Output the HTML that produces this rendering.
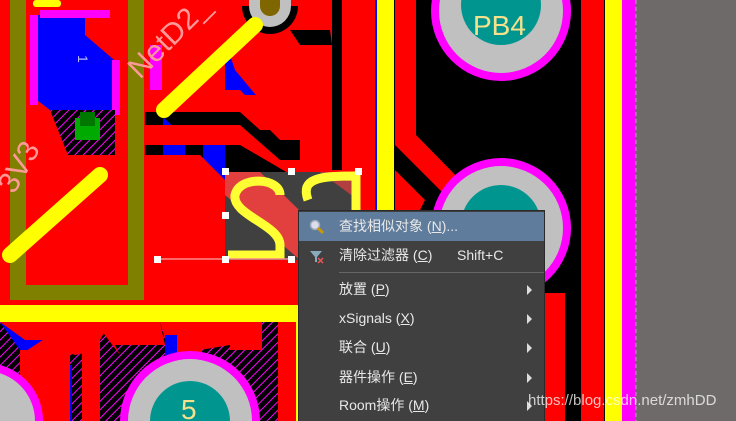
<!DOCTYPE html>
<html><head><meta charset="utf-8"><style>
html,body{margin:0;padding:0;width:736px;height:421px;overflow:hidden;background:#000}
#c{position:absolute;left:0;top:0;display:block}
.menu{position:absolute;left:298px;top:210px;width:245px;height:210px;background:#404040;border:1px solid #2a2a2a;border-bottom:none;font-family:"Liberation Sans","Noto Sans CJK SC",sans-serif;font-size:14px;color:#e8e8e8;overflow:hidden}
.row{position:absolute;left:0;width:245px;height:29px;line-height:29px}
.row span{position:absolute;left:40px}
.row .sc{left:158px}
.hl{background:#5f7c9c}
.arr{position:absolute;left:228px;top:10px;width:0;height:0;border-left:5px solid #ddd;border-top:5px solid transparent;border-bottom:5px solid transparent}
.sep{position:absolute;left:40px;top:61px;width:205px;height:1px;background:#666}
.wm{position:absolute;left:528px;top:392px;height:18px;line-height:18px;font-family:"Liberation Sans",sans-serif;font-size:15px;color:rgba(255,255,255,0.75)}
</style></head><body>
<svg id="c" width="736" height="421" viewBox="0 0 736 421">
<defs>
<pattern id="h" width="6" height="6" patternUnits="userSpaceOnUse" patternTransform="rotate(45)">
<rect width="6" height="6" fill="#000"/><rect width="1" height="6" fill="#f0f"/></pattern>
</defs>
<rect width="736" height="421" fill="#000"/>
<rect x="0" y="0" width="375" height="305" fill="#f00"/>
<polygon points="35,15 85,15 85,35 120,65 120,110 50,110 30,95" fill="#00f"/>
<rect x="40" y="10" width="70" height="8" fill="#f0f"/>
<rect x="30" y="15" width="8" height="90" fill="#f0f"/>
<rect x="112" y="60" width="8" height="55" fill="#f0f"/>
<polygon points="50,110 115,110 115,160 70,160" fill="url(#h)"/>
<rect x="75" y="118" width="25" height="22" fill="#0a0"/>
<rect x="80" y="112" width="15" height="14" fill="#070"/>
<rect x="145" y="90" width="80" height="80" fill="#000"/>
<rect x="163" y="90" width="22" height="80" fill="#00f"/>
<rect x="203" y="90" width="22" height="80" fill="#00f"/>
<polygon points="225,40 250,15 260,20 260,95 225,95" fill="#00f"/>
<rect x="150" y="45" width="12" height="50" fill="#f0f"/>
<polygon points="145,100 240,100 280,140 300,140 300,180 230,180" fill="#000"/>
<rect x="163" y="140" width="22" height="60" fill="#00f"/>
<rect x="203" y="140" width="22" height="60" fill="#00f"/>
<polygon points="145,90 240,90 260,110 300,110 345,155 345,175 300,130 260,130 240,112 145,112" fill="#f00"/>
<polygon points="145,125 240,125 280,160 300,160 300,180 240,145 145,145" fill="#f00"/>
<polygon points="60,155 200,155 225,180 225,305 0,305 0,110" fill="#f00"/>
<polygon points="145,185 200,185 225,205 225,305 145,305" fill="#f00"/>
<polygon points="245,0 335,0 335,20 315,45 310,50 320,70 375,70 375,180 310,150 260,100 235,70 225,40" fill="#f00"/>
<rect x="335" y="0" width="40" height="170" fill="#f00"/>
<rect x="332" y="0" width="10" height="170" fill="#000"/>
<polygon points="290,30 330,30 332,45 300,45" fill="#000"/>
<path d="M242,6 A28,28 0 0 0 298,6 Z" fill="#000"/>
<path d="M249,6 A21,21 0 0 0 291,6 L291,0 L249,0 Z" fill="#c0c0c0"/>
<path d="M260,6 A10,10 0 0 0 280,6 L280,0 L260,0 Z" fill="#806600"/>
<rect x="10" y="0" width="16" height="300" fill="#808000"/>
<rect x="128" y="0" width="16" height="300" fill="#808000"/>
<rect x="10" y="285" width="134" height="15" rx="4" fill="#808000"/>
<line x1="164" y1="110" x2="255" y2="25" stroke="#ff0" stroke-width="16" stroke-linecap="round"/>
<line x1="100" y1="175" x2="10" y2="255" stroke="#ff0" stroke-width="16" stroke-linecap="round"/>
<rect x="33" y="0" width="28" height="7" rx="3" fill="#ff0"/>
<text x="0" y="0" transform="translate(140,80) rotate(-45)" fill="#ff9999" font-family="Liberation Sans" font-size="30">NetD2_</text>
<text x="0" y="0" transform="translate(14,195) rotate(-60)" fill="#ff9999" font-family="Liberation Sans" font-size="30">3V3</text>
<text x="75" y="62" fill="#bbbbff" font-family="Liberation Sans" font-size="14" transform="rotate(90,80,60)">1</text>
<rect x="225" y="172" width="133" height="88" fill="#404040"/>
<polygon points="225,172 260,172 330,240 330,260 300,260 225,195" fill="#ff4040" opacity="0.85"/>
<polygon points="320,172 358,172 358,200" fill="#ff4040" opacity="0.6"/>
<path d="M280,195 C280,178 240,175 235,195 C232,215 280,225 280,245 L280,255 L228,255" fill="none" stroke="#ff3" stroke-width="9"/>
<path d="M308,200 C300,178 320,176 356,176 L356,230" fill="none" stroke="#ff3" stroke-width="9"/>
<line x1="158" y1="259" x2="292" y2="259" stroke="#f88" stroke-width="1.5"/>
<g fill="#fff"><rect x="222" y="168" width="7" height="7"/><rect x="288" y="168" width="7" height="7"/><rect x="355" y="168" width="7" height="7"/><rect x="222" y="212" width="7" height="7"/><rect x="154" y="256" width="7" height="7"/><rect x="222" y="256" width="7" height="7"/><rect x="288" y="256" width="7" height="7"/></g>
<rect x="0" y="322" width="298" height="99" fill="url(#h)"/>
<rect x="0" y="305" width="298" height="17" fill="#ff0"/>
<polygon points="0,322 40,322 75,350 20,350" fill="#00f"/>
<polygon points="0,322 70,322 95,340 25,340" fill="#f00"/>
<polygon points="70,322 110,322 100,340 60,360 60,421 25,421 20,355" fill="#f00"/>
<polygon points="60,322 100,322 100,350 75,355 60,350" fill="#f00"/>
<polygon points="20,350 70,350 70,421 20,421" fill="#f00"/>
<rect x="70" y="365" width="2" height="56" fill="#00f"/>
<polygon points="95,322 160,322 165,345 115,345 120,355" fill="#f00"/>
<polygon points="110,322 160,322 170,355 230,345 260,340 255,322" fill="#f00"/>
<polygon points="230,322 262,322 262,350 230,350" fill="#f00"/>
<rect x="165" y="335" width="12" height="25" fill="#00f"/>
<rect x="180" y="330" width="22" height="35" fill="#f00"/>
<polygon points="80,322 100,345 100,421 82,421 82,360" fill="#f00"/>
<rect x="278" y="322" width="20" height="99" fill="#f00"/>
<rect x="296" y="322" width="2" height="99" fill="#ff0"/>
<path d="M120,421 A70,70 0 0 1 260,421 Z" fill="#f0f"/>
<path d="M128,421 A62,62 0 0 1 252,421 Z" fill="#c0c0c0"/>
<path d="M150,421 A40,40 0 0 1 230,421 Z" fill="#00968f"/>
<text x="181" y="419" fill="#f5e08c" font-family="Liberation Sans" font-size="28">5</text>
<path d="M-73,421 A58,58 0 0 1 43,421 Z" fill="#f0f"/>
<path d="M-65,421 A50,50 0 0 1 35,421 Z" fill="#c0c0c0"/>
<rect x="375" y="0" width="205" height="421" fill="#000"/>
<rect x="375" y="0" width="2" height="421" fill="#00f"/>
<rect x="377" y="0" width="17" height="421" fill="#ff0"/>
<polygon points="395,0 416,0 416,135 470,190 455,205 395,145" fill="#f00"/>
<polygon points="395,170 425,200 420,210 395,215" fill="#f00"/>
<rect x="395" y="210" width="20" height="211" fill="#f00"/>
<circle cx="501" cy="11" r="70" fill="#f0f"/>
<circle cx="501" cy="11" r="62" fill="#c0c0c0"/>
<circle cx="501" cy="5" r="40" fill="#00968f"/>
<text x="473" y="35" fill="#f5e08c" font-family="Liberation Sans" font-size="28">PB4</text>
<circle cx="501" cy="228" r="70" fill="#f0f"/>
<circle cx="501" cy="228" r="62" fill="#c0c0c0"/>
<circle cx="501" cy="225" r="40" fill="#00968f"/>
<rect x="545" y="293" width="20" height="128" fill="#f00"/>
<rect x="581" y="0" width="23" height="421" fill="#f00"/>
<rect x="605" y="0" width="17" height="421" fill="#ff0"/>
<rect x="622" y="0" width="14" height="421" fill="#f0f"/>
<rect x="636" y="0" width="100" height="421" fill="#6e6a69"/>
<line x1="636" y1="0" x2="636" y2="421" stroke="#b080b0" stroke-width="1.5" stroke-dasharray="4,3"/>
</svg>
<div class="menu">
<div class="row hl" style="top:1px"><svg style="position:absolute;left:10px;top:7px" width="16" height="16"><circle cx="6" cy="6" r="4.5" fill="#dde" stroke="#9ab" stroke-width="1.5"/><line x1="9" y1="9" x2="14" y2="14" stroke="#c90" stroke-width="3"/></svg><span>查找相似对象 (<u>N</u>)...</span></div>
<div class="row" style="top:30px"><svg style="position:absolute;left:10px;top:8px" width="16" height="16"><polygon points="1,2 13,2 8,8 8,13 6,13 6,8" fill="#8ab"/><line x1="9" y1="9" x2="14" y2="14" stroke="#e55" stroke-width="1.5"/><line x1="14" y1="9" x2="9" y2="14" stroke="#e55" stroke-width="1.5"/></svg><span>清除过滤器 (<u>C</u>)</span><span class="sc">Shift+C</span></div>
<div class="sep"></div>
<div class="row" style="top:64px"><span>放置 (<u>P</u>)</span><i class="arr"></i></div>
<div class="row" style="top:93px"><span>xSignals (<u>X</u>)</span><i class="arr"></i></div>
<div class="row" style="top:122px"><span>联合 (<u>U</u>)</span><i class="arr"></i></div>
<div class="row" style="top:152px"><span>器件操作 (<u>E</u>)</span><i class="arr"></i></div>
<div class="row" style="top:180px"><span>Room操作 (<u>M</u>)</span><i class="arr"></i></div>
</div>
<div class="wm">https://blog.csdn.net/zmhDD</div>
</body></html>
